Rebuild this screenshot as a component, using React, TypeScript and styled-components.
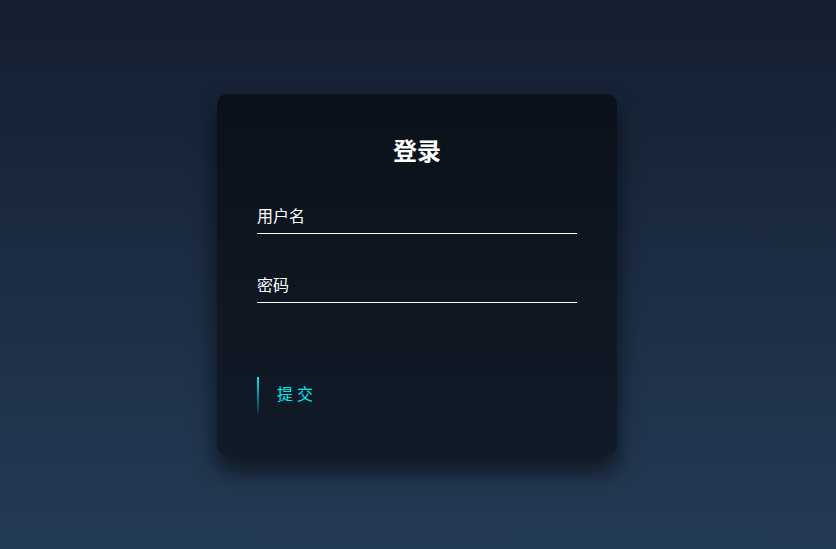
import React from 'react';
import styled, { createGlobalStyle } from 'styled-components';

const GlobalStyle = createGlobalStyle`
  html, body {
    margin: 0;
    padding: 0;
    height: 100%;
  }
  body {
    font-family: "Noto Sans CJK SC", "Noto Sans", sans-serif;
    background: linear-gradient(#141e30, #243b55);
    min-height: 100vh;
  }
`;

const Page = styled.div`
  display: flex;
  align-items: center;
  justify-content: center;
  min-height: 100vh;
  padding-right: 2px;
  box-sizing: border-box;
`;

const LoginBox = styled.div`
  width: 400px;
  padding: 40px;
  box-sizing: border-box;
  background: rgba(0, 0, 0, 0.5);
  box-shadow: 0 15px 25px rgba(0, 0, 0, 0.6);
  border-radius: 10px;
`;

const Title = styled.h2`
  margin: 0 0 30px;
  padding: 0;
  color: #fff;
  text-align: center;
  font-size: 24px;
  line-height: 31px;
  font-weight: 700;
`;

const Form = styled.form`
  display: flex;
  flex-direction: column;
`;

const UserBox = styled.div`
  position: relative;
  margin-bottom: 30px;
`;

const Input = styled.input`
  display: block;
  width: 100%;
  box-sizing: border-box;
  padding: 10px 0;
  font-size: 16px;
  line-height: 18px;
  font-family: inherit;
  color: #fff;
  margin: 0;
  border: none;
  border-bottom: 1px solid #fff;
  outline: none;
  background: transparent;
`;

const Label = styled.label`
  position: absolute;
  top: 0;
  left: 0;
  padding: 11px 0 9px;
  font-size: 16px;
  line-height: 18px;
  color: #fff;
  pointer-events: none;
`;

const SubmitRow = styled.div`
  margin-top: 40px;
  height: 43px;
`;

const SubmitButton = styled.a`
  position: relative;
  display: inline-block;
  padding: 10px 20px;
  color: #03e9f4;
  font-size: 16px;
  line-height: 21px;
  letter-spacing: 4px;
  text-decoration: none;
  overflow: hidden;
  cursor: pointer;
`;

const EdgeLine = styled.span<{ offset: number }>`
  position: absolute;
  left: 0;
  top: ${p => p.offset}px;
  width: 2px;
  height: 100%;
  background: linear-gradient(180deg, #03e9f4, transparent);
`;

const App: React.FC = () => {
  return (
    <>
      <GlobalStyle />
      <Page>
        <LoginBox>
          <Title>登录</Title>
          <Form onSubmit={e => e.preventDefault()}>
            <UserBox>
              <Input type="text" name="username" required />
              <Label>用户名</Label>
            </UserBox>
            <UserBox>
              <Input type="password" name="password" required />
              <Label>密码</Label>
            </UserBox>
            <SubmitRow>
              <SubmitButton>
                <EdgeLine offset={4} />
                提交
              </SubmitButton>
            </SubmitRow>
          </Form>
        </LoginBox>
      </Page>
    </>
  );
};

export default App;
